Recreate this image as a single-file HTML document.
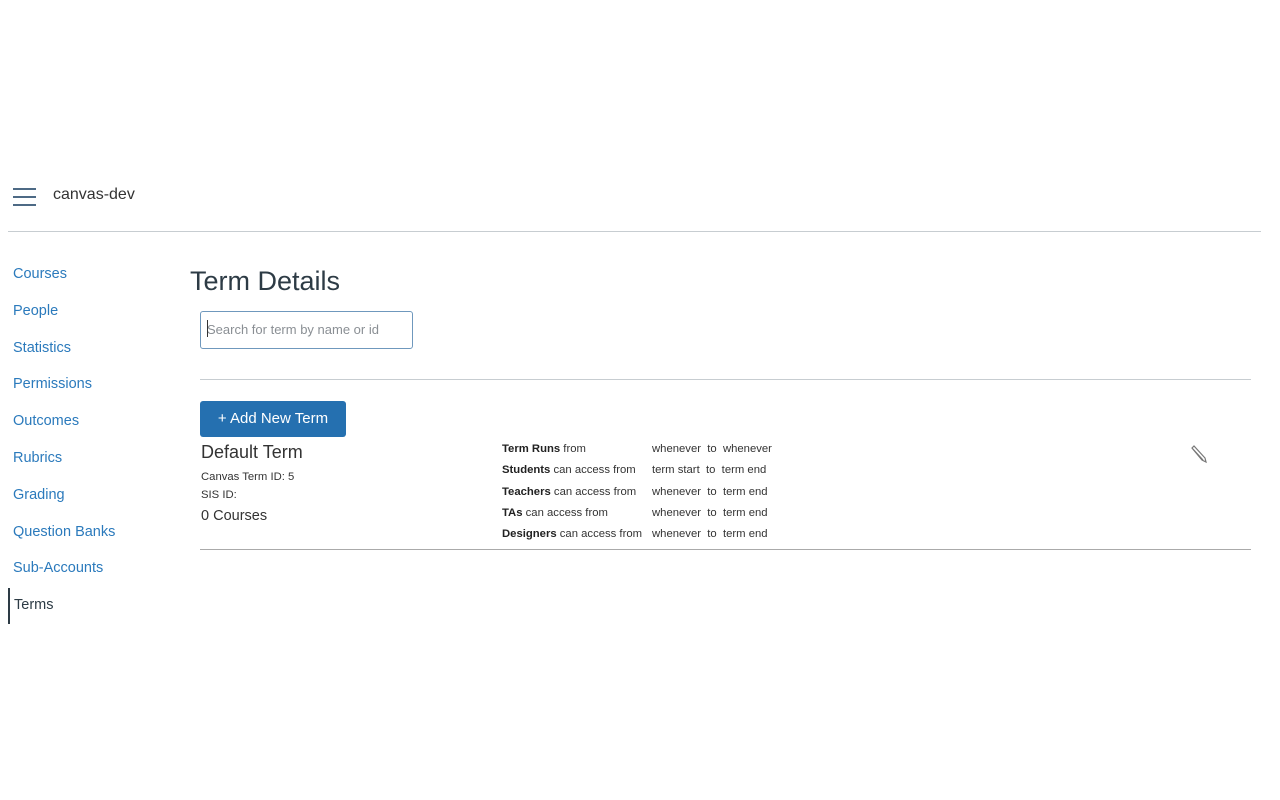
<!DOCTYPE html>
<html><head><style>
body{margin:0;width:1280px;height:800px;background:#fff;font-family:"Liberation Sans",sans-serif;position:relative;overflow:hidden;color:#2d3b45}
.a{position:absolute;white-space:nowrap}
.nav{color:#2b7abc;font-size:14.5px}
.s{font-size:11.3px;color:#333}
.s b{font-weight:bold;color:#222}
</style></head><body>
<div class="a" style="left:13px;top:188px;width:23px">
<div style="height:2px;background:#4d6a85;margin-bottom:6px"></div><div style="height:2px;background:#4d6a85;margin-bottom:6px"></div><div style="height:2px;background:#4d6a85"></div></div>
<div class="a" style="left:53px;top:186px;font-size:16px;color:#333">canvas-dev</div>
<div class="a" style="left:8px;top:231px;width:1253px;height:1px;background:#c7cdd1"></div>
<div class="a nav" style="left:13px;top:266px">Courses</div>
<div class="a nav" style="left:13px;top:303px">People</div>
<div class="a nav" style="left:13px;top:340px">Statistics</div>
<div class="a nav" style="left:13px;top:376px">Permissions</div>
<div class="a nav" style="left:13px;top:413px">Outcomes</div>
<div class="a nav" style="left:13px;top:450px">Rubrics</div>
<div class="a nav" style="left:13px;top:487px">Grading</div>
<div class="a nav" style="left:13px;top:524px">Question Banks</div>
<div class="a nav" style="left:13px;top:560px">Sub-Accounts</div>
<div class="a" style="left:8px;top:588px;width:2px;height:36px;background:#2d3b45"></div>
<div class="a" style="left:14px;top:597px;font-size:14.5px;color:#2d3b45">Terms</div>
<div class="a" style="left:190px;top:266px;font-size:27px;color:#2d3b45">Term Details</div>
<div class="a" style="left:200px;top:311px;width:211px;height:36px;border:1px solid #6f98bd;border-radius:3px"></div>
<div class="a" style="left:207px;top:322px;font-size:13px;color:#8a8f94">Search for term by name or id</div>
<div class="a" style="left:207px;top:320px;width:1px;height:17px;background:#333"></div>
<div class="a" style="left:200px;top:379px;width:1051px;height:1px;background:#c7cdd1"></div>
<div class="a" style="left:200px;top:401px;width:146px;height:36px;background:#2570b0;border-radius:3px;color:#fff;font-size:15px;line-height:36px;text-align:center">+ Add New Term</div>
<div class="a" style="left:201px;top:442px;font-size:18px;color:#333">Default Term</div>
<div class="a s" style="left:201px;top:471px">Canvas Term ID: 5</div>
<div class="a s" style="left:201px;top:489px">SIS ID:</div>
<div class="a" style="left:201px;top:508px;font-size:14.5px;color:#333">0 Courses</div>
<div class="a s" style="left:502px;top:443px"><b>Term Runs</b> from</div>
<div class="a s" style="left:502px;top:464px"><b>Students</b> can access from</div>
<div class="a s" style="left:502px;top:486px"><b>Teachers</b> can access from</div>
<div class="a s" style="left:502px;top:507px"><b>TAs</b> can access from</div>
<div class="a s" style="left:502px;top:528px"><b>Designers</b> can access from</div>
<div class="a s" style="left:652px;top:443px">whenever&nbsp; to&nbsp; whenever</div>
<div class="a s" style="left:652px;top:464px">term start&nbsp; to&nbsp; term end</div>
<div class="a s" style="left:652px;top:486px">whenever&nbsp; to&nbsp; term end</div>
<div class="a s" style="left:652px;top:507px">whenever&nbsp; to&nbsp; term end</div>
<div class="a s" style="left:652px;top:528px">whenever&nbsp; to&nbsp; term end</div>
<svg class="a" style="left:1188px;top:444px" width="20" height="20" viewBox="0 0 20 20"><path d="M4 4 L6 2 L17 14 L18 18 L14 16 Z M4 4 L15 16" fill="none" stroke="#777" stroke-width="1.2"/></svg>
<div class="a" style="left:200px;top:549px;width:1051px;height:1px;background:#aaa"></div>
</body></html>
